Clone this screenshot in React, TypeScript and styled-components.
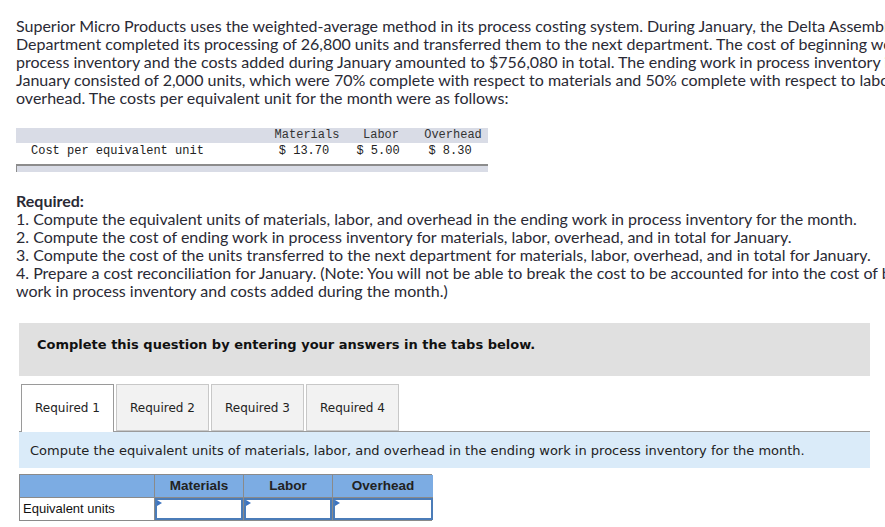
import React from "react";
import styled, { createGlobalStyle } from "styled-components";

const Global = createGlobalStyle`
  html, body { margin: 0; padding: 0; background: #fff; overflow: hidden; }
  body { width: 885px; height: 527px; }
`;

const Page = styled.div`
  width: 1000px;
  padding: 17px 0 0 16px;
  box-sizing: border-box;
  color: #222;
`;

const Para = styled.p`
  margin: 0;
  font-family: "Lato", "Open Sans", sans-serif;
  font-size: 16px;
  line-height: 18px;
  color: #2a2a35;
  white-space: nowrap;
`;

const CostTable = styled.div`
  margin-top: 21px;
  width: 472px;
  display: grid;
  grid-template-columns: 254px 74px 74px 70px;
  font-family: "Liberation Mono", "DejaVu Sans Mono", monospace;
  font-size: 12px;
  color: #222;
`;

const CostHead = styled.div`
  background: #d9dce6;
  height: 15px;
  line-height: 15px;
  text-align: center;
  color: #333;
`;

const CostCell = styled.div<{ $label?: boolean }>`
  height: 17px;
  line-height: 17px;
  text-align: ${(p) => (p.$label ? "left" : "center")};
  padding-left: ${(p) => (p.$label ? "15px" : "0")};
  padding-right: ${(p) => (p.$label ? "0" : "6px")};
`;

const CostFoot = styled.div`
  grid-column: 1 / -1;
  margin-top: 4px;
  height: 6px;
  background: #d9dce6;
  border-top: 2px solid #8c8c8c;
  border-left: 1px solid #8c8c8c;
`;

const Section = styled.div`
  margin-top: 20px;
`;

const Bold = styled.div`
  font-weight: 700;
`;

const Question = styled.div`
  width: 851px;
  margin: 23px 0 0 3px;
`;

const Banner = styled.div`
  background: #e0e0e0;
  height: 53px;
  box-sizing: border-box;
  padding: 14px 0 0 18px;
  line-height: 16px;
  font-family: "DejaVu Sans", Verdana, sans-serif;
  font-weight: 700;
  font-size: 13px;
  color: #111;
`;

const Tabs = styled.div`
  margin-top: 8px;
  display: flex;
  gap: 2px;
  padding-left: 2px;
  border-bottom: 1px solid #9a9a9a;
  height: 47px;
  align-items: flex-end;
`;

const Tab = styled.div<{ $active?: boolean }>`
  box-sizing: border-box;
  width: 93px;
  height: ${(p) => (p.$active ? "48px" : "47px")};
  margin-bottom: ${(p) => (p.$active ? "-1px" : "0")};
  background: ${(p) => (p.$active ? "#fff" : "#f2f2f2")};
  border: 1px solid ${(p) => (p.$active ? "#9a9a9a" : "#c8c8c8")};
  border-bottom: ${(p) => (p.$active ? "none" : "1px solid #c8c8c8")};
  display: flex;
  align-items: center;
  justify-content: center;
  font-family: "DejaVu Sans", Verdana, sans-serif;
  font-size: 12px;
  color: #222;
  padding-bottom: ${(p) => (p.$active ? "1px" : "0")};
`;

const Instruction = styled.div`
  background: #daebf9;
  height: 36px;
  display: flex;
  align-items: center;
  padding-left: 11px;
  font-family: "DejaVu Sans", Verdana, sans-serif;
  font-size: 13px;
  color: #222;
`;

const Answer = styled.div`
  margin-top: 6px;
  width: 413px;
  display: grid;
  grid-template-columns: 134px 89px 89px 101px;
  border: 1px solid #8a8a8a;
  box-sizing: border-box;
  font-family: "Liberation Sans", Arial, sans-serif;
  font-size: 13px;
`;

const AHead = styled.div`
  background: #7cace3;
  height: 22px;
  line-height: 22px;
  text-align: center;
  font-weight: 700;
  font-size: 13.5px;
  color: #222;
  border-left: 1px solid #8a8a8a;
  border-bottom: 1px solid #8a8a8a;
  &:first-child { border-left: none; }
`;

const ALabel = styled.div`
  height: 22px;
  line-height: 22px;
  padding-left: 3px;
  color: #111;
`;

const ACell = styled.div`
  position: relative;
  height: 22px;
  border-left: 1px solid #8a8a8a;
  box-sizing: border-box;
`;

const Input = styled.div`
  position: absolute;
  inset: 0;
  border: 2px solid #4b7cb8;
  background: #fff;
  &::before {
    content: "";
    position: absolute;
    top: 0;
    left: 0;
    border-top: 3px solid transparent;
    border-bottom: 3px solid transparent;
    border-left: 5px solid #3d74c0;
  }
`;

export default function App() {
  return (
    <>
      <Global />
      <Page>
        <Para>
          Superior Micro Products uses the weighted-average method in its process costing system. During January, the Delta Assembly
          <br />
          Department completed its processing of 26,800 units and transferred them to the next department. The cost of beginning work in
          <br />
          process inventory and the costs added during January amounted to $756,080 in total. The ending work in process inventory in
          <br />
          January consisted of 2,000 units, which were 70% complete with respect to materials and 50% complete with respect to labor and
          <br />
          overhead. The costs per equivalent unit for the month were as follows:
        </Para>
        <CostTable>
          <CostHead />
          <CostHead>Materials</CostHead>
          <CostHead>Labor</CostHead>
          <CostHead>Overhead</CostHead>
          <CostCell $label>Cost per equivalent unit</CostCell>
          <CostCell>$ 13.70</CostCell>
          <CostCell>$ 5.00</CostCell>
          <CostCell>$ 8.30</CostCell>
          <CostFoot />
        </CostTable>
        <Section>
          <Para as="div">
            <Bold>Required:</Bold>
            1. Compute the equivalent units of materials, labor, and overhead in the ending work in process inventory for the month.
            <br />
            2. Compute the cost of ending work in process inventory for materials, labor, overhead, and in total for January.
            <br />
            3. Compute the cost of the units transferred to the next department for materials, labor, overhead, and in total for January.
            <br />
            4. Prepare a cost reconciliation for January. (Note: You will not be able to break the cost to be accounted for into the cost of beginning
            <br />
            work in process inventory and costs added during the month.)
          </Para>
        </Section>
        <Question>
          <Banner>Complete this question by entering your answers in the tabs below.</Banner>
          <Tabs>
            <Tab $active>Required 1</Tab>
            <Tab>Required 2</Tab>
            <Tab>Required 3</Tab>
            <Tab>Required 4</Tab>
          </Tabs>
          <Instruction>
            Compute the equivalent units of materials, labor, and overhead in the ending work in process inventory for the month.
          </Instruction>
          <Answer>
            <AHead />
            <AHead>Materials</AHead>
            <AHead>Labor</AHead>
            <AHead>Overhead</AHead>
            <ALabel>Equivalent units</ALabel>
            <ACell><Input /></ACell>
            <ACell><Input /></ACell>
            <ACell><Input /></ACell>
          </Answer>
        </Question>
      </Page>
    </>
  );
}
